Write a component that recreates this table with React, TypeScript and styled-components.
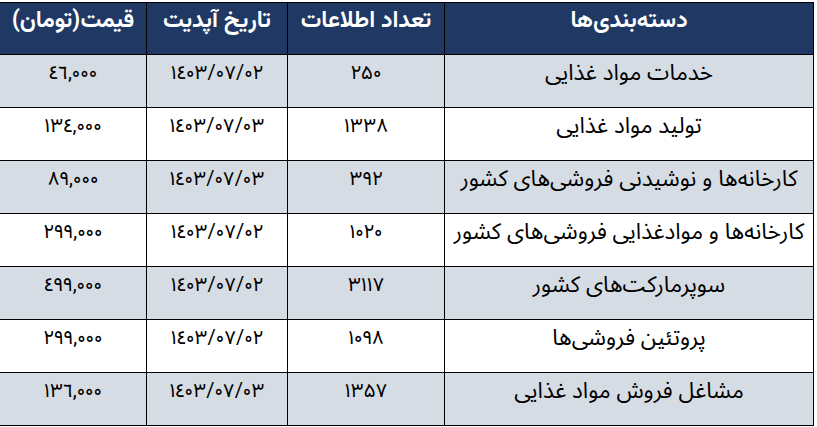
import React from 'react';
import styled, { createGlobalStyle } from 'styled-components';

const GlobalStyle = createGlobalStyle`
    html, body {
        margin: 0;
        padding: 0;
        background: #ffffff;
    }
    body {
        font-family: 'Noto Sans Arabic', 'DejaVu Sans', sans-serif;
    }
`;

const Page = styled.div`
    width: 817px;
    height: 427px;
    padding: 2px 3px 0 0;
    box-sizing: border-box;
    direction: rtl;
    overflow: hidden;
`;

const Table = styled.table`
    width: 814px;
    border-collapse: collapse;
    table-layout: fixed;
    color: #000000;
`;

const Col = styled.col<{ $w: number }>`
    width: ${({ $w }) => $w}px;
`;

const HeadCell = styled.th`
    height: 52px;
    padding: 0 4px;
    box-sizing: border-box;
    background: #203864;
    color: #ffffff;
    border: 1.5px solid #000000;
    font-family: 'Vazirmatn', 'Noto Sans Arabic', 'DejaVu Sans', sans-serif;
    font-size: 23px;
    line-height: 36px;
    font-weight: bold;
    text-align: center;
    vertical-align: top;
    white-space: nowrap;
`;

const Row = styled.tr<{ $shaded: boolean }>`
    background: ${({ $shaded }) => ($shaded ? '#d6dce4' : '#ffffff')};
`;

const Cell = styled.td`
    height: 53px;
    padding: 2px 4px 0;
    box-sizing: border-box;
    border: 1.5px solid #000000;
    font-family: 'Noto Sans Arabic', 'DejaVu Sans', sans-serif;
    font-size: 22.5px;
    line-height: 32px;
    text-align: center;
    vertical-align: top;
    white-space: nowrap;
`;

const NumCell = styled(Cell)`
    padding-top: 3px;
    direction: ltr;
    font-family: 'Vazirmatn', 'Noto Sans Arabic', 'DejaVu Sans', sans-serif;
    font-size: 20px;
`;

type Item = {
    title: string;
    count: string;
    date: string;
    price: string;
};

const items: Item[] = [
    { title: 'خدمات مواد غذایی', count: '۲۵۰', date: '۱٤۰۳/۰۷/۰۲', price: '٤٦,۰۰۰' },
    { title: 'تولید مواد غذایی', count: '۱۳۳۸', date: '۱٤۰۳/۰۷/۰۳', price: '۱۳٤,۰۰۰' },
    { title: 'کارخانه‌ها و نوشیدنی فروشی‌های کشور', count: '۳۹۲', date: '۱٤۰۳/۰۷/۰۳', price: '۸۹,۰۰۰' },
    { title: 'کارخانه‌ها و موادغذایی فروشی‌های کشور', count: '۱۰۲۰', date: '۱٤۰۳/۰۷/۰۲', price: '۲۹۹,۰۰۰' },
    { title: 'سوپرمارکت‌های کشور', count: '۳۱۱۷', date: '۱٤۰۳/۰۷/۰۲', price: '٤۹۹,۰۰۰' },
    { title: 'پروتئین فروشی‌ها', count: '۱۰۹۸', date: '۱٤۰۳/۰۷/۰۲', price: '۲۹۹,۰۰۰' },
    { title: 'مشاغل فروش مواد غذایی', count: '۱۳۵۷', date: '۱٤۰۳/۰۷/۰۳', price: '۱۳٦,۰۰۰' },
];

const App: React.FC = () => (
    <>
        <GlobalStyle />
        <Page>
            <Table>
                <colgroup>
                    <Col $w={369} />
                    <Col $w={157} />
                    <Col $w={141} />
                    <Col $w={147} />
                </colgroup>
                <thead>
                    <tr>
                        <HeadCell>دسته‌بندی‌ها</HeadCell>
                        <HeadCell>تعداد اطلاعات</HeadCell>
                        <HeadCell>تاریخ آپدیت</HeadCell>
                        <HeadCell>قیمت(تومان)</HeadCell>
                    </tr>
                </thead>
                <tbody>
                    {items.map((item, i) => (
                        <Row key={item.title} $shaded={i % 2 === 0}>
                            <Cell>{item.title}</Cell>
                            <NumCell>{item.count}</NumCell>
                            <NumCell>{item.date}</NumCell>
                            <NumCell>{item.price}</NumCell>
                        </Row>
                    ))}
                </tbody>
            </Table>
        </Page>
    </>
);

export default App;
